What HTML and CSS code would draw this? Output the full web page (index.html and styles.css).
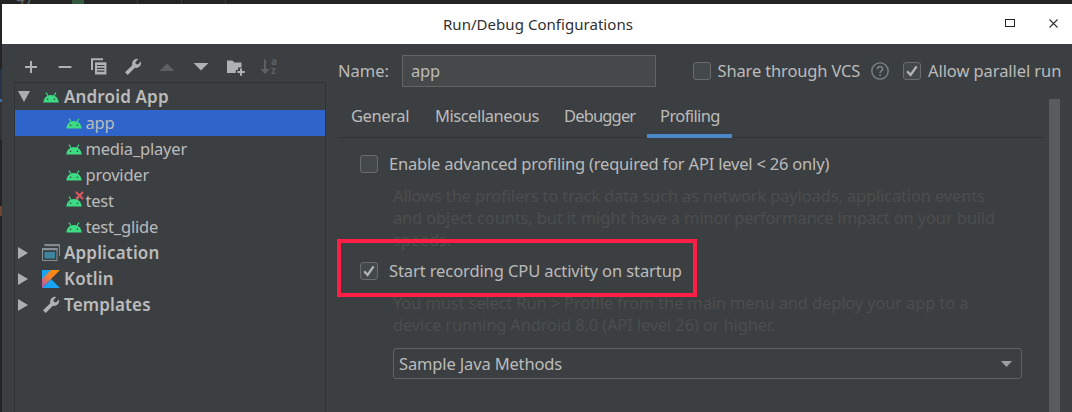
FILE: index.html
```
<!DOCTYPE html>
<html lang="en">
<head>
<meta charset="utf-8">
<title>Run/Debug Configurations</title>
<link rel="stylesheet" href="styles.css">
</head>
<body>
<svg class="defs" width="0" height="0">
  <defs>
    <symbol id="android" viewBox="0 0 16 11">
      <path d="M3 .6 5 3.8M13 .6 11 3.8" stroke="#3ddc84" stroke-width="1.1"/>
      <path d="M.3 10.6C.6 5.8 3.8 2.9 8 2.9s7.400 2.900 7.700 7.700z" fill="#3ddc84"/>
      <circle cx="4.600" cy="7.300" r=".8" fill="#3c3f41"/><circle cx="11.400" cy="7.300" r=".8" fill="#3c3f41"/>
    </symbol>
    <symbol id="wrench" viewBox="0 0 18 18">
      <path d="M1 14.300 8.300 7.300C7.600 4.300 9.300 1.200 12.900.8L14.300 1 11.400 4.100l.4 2 2.100.5L17 3.600c.8 4-2.200 7-6.100 6.200L3.700 17z" fill="#afb1b3"/>
    </symbol>
    <symbol id="closed" viewBox="0 0 10 12"><path d="M0 0 10 6 0 12z" fill="#adadad"/></symbol>
    <symbol id="check" viewBox="0 0 18 18"><path d="M4.200 9.200 7.600 13 13.600 4.400" fill="none" stroke="#b4b4b4" stroke-width="2.300"/></symbol>
  </defs>
</svg>
<div class="desktop">
  <div class="backdrop">
    <span class="line-no">47</span><i class="green"></i>
    <i class="guide g1"></i><i class="guide g2"></i><i class="guide g3"></i>
    <i class="edge e1"></i><i class="edge e2"></i><i class="edge e3"></i><i class="edge e4"></i>
  </div>
  <div class="window">
    <header class="titlebar">
      <span class="title">Run/Debug Configurations</span>
      <svg class="maximize" width="10" height="8"><rect x=".5" y=".5" width="9" height="7" fill="none" stroke="#222"/></svg>
      <svg class="close" width="9" height="9"><path d="M.5.5l8 8M8.500.5l-8 8" stroke="#333" stroke-width="1.100"/></svg>
    </header>
    <div class="content">
      <aside class="sidebar">
        <div class="toolbar">
          <svg viewBox="0 0 18 18"><path d="M9 3v12M3 9h12" stroke="#afb1b3" stroke-width="2"/></svg>
          <svg viewBox="0 0 18 18"><path d="M2.600 9h12.800" stroke="#afb1b3" stroke-width="2"/></svg>
          <svg viewBox="0 0 18 18"><path d="M2 12V1.300h11" fill="none" stroke="#afb1b3" stroke-width="2"/><path d="M5 4.300h11.400v12.200H5z" fill="#afb1b3"/><path d="M7 7.500h7.400M7 10.300h7.400M7 13.100h7.400" stroke="#3c3f41" stroke-width="1.200"/></svg>
          <svg viewBox="0 0 18 18"><use href="#wrench"/></svg>
          <svg viewBox="0 0 18 18"><path d="M1.600 13 9 5.400l7.400 7.600z" fill="#5d5f60"/></svg>
          <svg viewBox="0 0 18 18"><path d="M1.600 5h14.800L9 12.500z" fill="#afb1b3"/></svg>
          <svg class="folder" viewBox="0 0 18 18"><path d="M0 2.600h5.400l2 2H14.500v5H11v2.300H8.800V15H0z" fill="#afb1b3"/><path d="M14 10.500v7.200M10.400 14.100h7.400" stroke="#afb1b3" stroke-width="2"/></svg>
          <div class="sort"><svg viewBox="0 0 10 18"><path d="M5 1.500v10" stroke="#5d5f60" stroke-width="2"/><path d="M.3 11h9.400L5 16z" fill="#5d5f60"/></svg><div class="az"><span>a</span><span>z</span></div></div>
        </div>
        <div class="tree">
          <div class="row group"><svg class="open" width="12" height="11" viewBox="0 0 12 11"><path d="M0 0h12L6 11z" fill="#adadad"/></svg><span class="icon"><svg width="16" height="11"><use href="#android"/></svg></span><span>Android App</span></div>
          <div class="row item selected"><svg width="16" height="11"><use href="#android"/></svg><span>app</span></div>
          <div class="row item"><svg width="16" height="11"><use href="#android"/></svg><span>media_player</span></div>
          <div class="row item"><svg width="16" height="11"><use href="#android"/></svg><span>provider</span></div>
          <div class="row item"><svg width="16" height="11"><use href="#android"/></svg><svg class="cross" width="9" height="9"><path d="M1 1l7 7M8 1 1 8" stroke="#db5860" stroke-width="2.100"/></svg><span>test</span></div>
          <div class="row item"><svg width="16" height="11"><use href="#android"/></svg><span>test_glide</span></div>
          <div class="row group"><svg class="shut" width="10" height="12"><use href="#closed"/></svg><span class="icon"><svg width="18" height="18"><path d="M2.500 .5h15v11.500" fill="none" stroke="#7f8b91"/><path d="M2.500 0h15.500v2.200H2.500z" fill="#7f8b91"/><path d="M.5 4.500h14.500v12H.5z" fill="#3c3f41" stroke="#87939a"/><path d="M0 4h15.500v2.200H0z" fill="#87939a"/><path d="M2.500 8h10.500v6.500H2.500z" fill="#3e86a0"/></svg></span><span>Application</span></div>
          <div class="row group"><svg class="shut" width="10" height="12"><use href="#closed"/></svg><span class="icon"><svg width="18" height="18"><defs><linearGradient id="kt" x1="0" y1="1" x2="1" y2="0"><stop offset=".1" stop-color="#b75ea4"/><stop offset=".5" stop-color="#f4812e"/><stop offset="1" stop-color="#ff9100"/></linearGradient></defs><path d="M0 0h10L0 10z" fill="#18a4f5"/><path d="M0 18 9 9l9 9z" fill="#18a4f5"/><path d="M9 0h9L0 18V9z" fill="url(#kt)"/></svg></span><span>Kotlin</span></div>
          <div class="row group"><svg class="shut" width="10" height="12"><use href="#closed"/></svg><span class="icon"><svg width="18" height="18"><use href="#wrench"/></svg></span><span>Templates</span></div>
        </div>
      </aside>
      <main class="editor">
        <div class="name-row">
          <label class="name-label">Name:</label>
          <div class="field"><span>app</span></div>
          <span class="box"></span><span class="share">Share through VCS</span>
          <svg class="help" width="18" height="18"><circle cx="9" cy="9" r="8.200" fill="none" stroke="#7b858a" stroke-width="1.300"/><path d="M6.500 7.200C6.500 3.700 11.700 3.800 11.700 7c0 1.800-2.600 2-2.600 4M9.100 12.200v1.900" fill="none" stroke="#7b858a" stroke-width="1.500"/></svg>
          <span class="box"><svg width="18" height="18"><use href="#check"/></svg></span><span class="parallel">Allow parallel run</span>
        </div>
        <div class="pane">
          <div class="body">
            <nav class="tabs">
              <span class="tab tab-general">General</span><span class="tab tab-misc">Miscellaneous</span><span class="tab tab-debug">Debugger</span><span class="tab tab-prof active">Profiling</span>
            </nav>
            <div class="option advanced"><span class="box"></span><span class="advanced-text">Enable advanced profiling (required for API level &lt; 26 only)</span></div>
            <p class="hint first"><span>Allows the profilers to track data such as network payloads, application events</span><span>and object counts, but it might have a minor performance impact on your build</span><span>speeds.</span></p>
            <div class="highlight"><div class="option"><span class="box"><svg width="18" height="18"><use href="#check"/></svg></span><span class="startup-text">Start recording CPU activity on startup</span></div></div>
            <p class="hint second"><span>You must select Run &gt; Profile from the main menu and deploy your app to a</span><span>device running Android 8.0 (API level 26) or higher.</span></p>
            <div class="combo"><span>Sample Java Methods</span><svg width="11" height="6"><path d="M0 0h11L5.500 6z" fill="#9da0a2"/></svg></div>
          </div>
          <div class="scrollbar"></div>
        </div>
      </main>
    </div>
  </div>
</div>
</body>
</html>
```
FILE: styles.css
```
* { box-sizing: border-box; }
body { margin: 0; background: #242424; font-family: "Noto Sans", sans-serif; font-size: 16.5px; letter-spacing: -.15px; color: #bbbbbb; overflow: hidden; }
.defs { position: absolute; }
svg { display: block; flex: none; }
span { white-space: nowrap; }
.desktop { position: relative; width: 1072px; height: 412px; padding: 4px 0 0 2px; background: #242424; overflow: hidden; }

/* editor behind the dialog */
.backdrop { position: absolute; inset: 0; overflow: hidden; }
.line-no { position: absolute; left: 16px; top: -10px; font: 15px/18px "DejaVu Sans Mono", monospace; letter-spacing: 0; color: #606366; }
.green { position: absolute; left: 72px; top: 0; width: 12px; height: 4px; background: #32593d; }
.guide { position: absolute; top: 0; width: 1px; height: 4px; background: #393939; }
.g1 { left: 137px; } .g2 { left: 181px; } .g3 { left: 225px; }
.edge { position: absolute; left: 0; width: 2px; }
.e1 { top: 69px; height: 33px; background: #263448; }
.e2 { top: 99px; height: 3px; background: #3a6ea5; }
.e3 { top: 206px; height: 10px; background: #70452f; }
.e4 { top: 102px; height: 38px; background: #303234; }

.window { position: relative; height: 408px; background: #3c3f41; }
.titlebar { display: flex; align-items: center; height: 40px; background: #fff; color: #303030; padding: 0 14px 0 441px; }
.title { width: 192px; letter-spacing: .04px; font-size: 15px; }
.maximize { margin-left: 370px; margin-top: -2px; }
.close { margin-left: auto; margin-top: -1px; }

.content { display: flex; height: 368px; }
.sidebar { width: 324px; padding-left: 12px; flex: none; }
.toolbar { display: flex; gap: 16px; height: 38px; padding: 14px 0 0 8px; }
.toolbar > svg { width: 18px; height: 18px; }
.toolbar .folder { margin-left: 1px; }
.sort { display: flex; gap: 1px; margin-left: -1px; }
.sort > svg { width: 10px; height: 18px; }
.az { display: grid; grid-template-rows: 9px 9px; font-size: 10px; font-weight: 700; line-height: 9px; letter-spacing: 0; color: #5d5f60; margin-top: -1px; }
.tree { height: 340px; border: 1px solid #303234; padding-top: 1px; }
.row { display: flex; align-items: center; height: 26px; line-height: 25px; }
.row > span:last-child { padding-bottom: 1px; }
.group { font-weight: 600; font-size: 17px; letter-spacing: .15px; }
.group > span:last-child { line-height: 24px; }
.open { margin: -2px 0 0 3px; }
.shut { margin-left: 3px; margin-right: 2px; }
.icon { display: flex; justify-content: center; width: 18px; margin: 0 4px 0 12px; }
.item { padding-left: 51px; gap: 3.500px; position: relative; letter-spacing: -.2px; }
.item > svg:first-child { margin-top: 1px; }
.selected { background: #2f65ca; }
.cross { position: absolute; left: 60px; top: 3px; }

.editor { flex: 1; padding: 11px 0 0 12px; min-width: 0; }
.name-row { display: flex; align-items: center; height: 32px; }
.name-label { width: 64px; letter-spacing: 0; padding-bottom: 2px; }
.field { width: 254px; height: 32px; padding-left: 8px; border: 1px solid #646464; background: #45494a; line-height: 29px; margin-right: 36.500px; flex: none; }
.box { flex: none; width: 18px; height: 18px; border: 1px solid #6b6b6b; border-radius: 3px; background: #43494a; }
.box svg { margin: -1px; }
.share, .parallel { padding-bottom: 2px; }
.share { margin-left: 7px; width: 153px; }
.help { margin-right: 14.500px; }
.parallel { margin-left: 7px; letter-spacing: -.08px; }
.pane { display: flex; height: 325px; padding-top: 12px; }
.body { width: 705px; flex: none; }
.scrollbar { width: 11px; height: 313px; margin-left: 6px; background: #595b5d; }
.tabs { display: flex; height: 39px; border-bottom: 1px solid #323232; }
.tab { height: 39px; line-height: 34px; padding-left: 13px; }
.tab-general { width: 84px; letter-spacing: -.4px; }
.tab-misc { width: 129px; letter-spacing: -.45px; }
.tab-debug { width: 96px; letter-spacing: -.85px; }
.tab-prof { width: 85px; letter-spacing: -.6px; }
.active { border-bottom: 4px solid #4a88c7; }
.option { display: flex; align-items: center; gap: 11px; }
.option > span:last-child { padding-bottom: 2px; }
.advanced { height: 26px; margin: 13px 0 0 22px; }
.advanced-text { letter-spacing: -.2px; }
.startup-text { letter-spacing: -.1px; }
.hint { margin: 0 0 0 55px; line-height: 22px; color: #4b4d4e; }
.hint span { display: block; }
.first { padding-top: 8px; }
.highlight { position: relative; width: 360px; height: 58px; margin: -12px 0 0 -1px; padding: 17px 0 0 19px; border: 4px solid #ff1e46; }
.highlight .option { height: 22px; }
.second { margin-top: -5px; }
.combo { display: flex; align-items: center; justify-content: space-between; width: 629px; height: 31px; margin: 12px 0 0 55px; padding: 0 9px 0 5px; border: 1px solid #5f6162; border-radius: 3px; }
```
